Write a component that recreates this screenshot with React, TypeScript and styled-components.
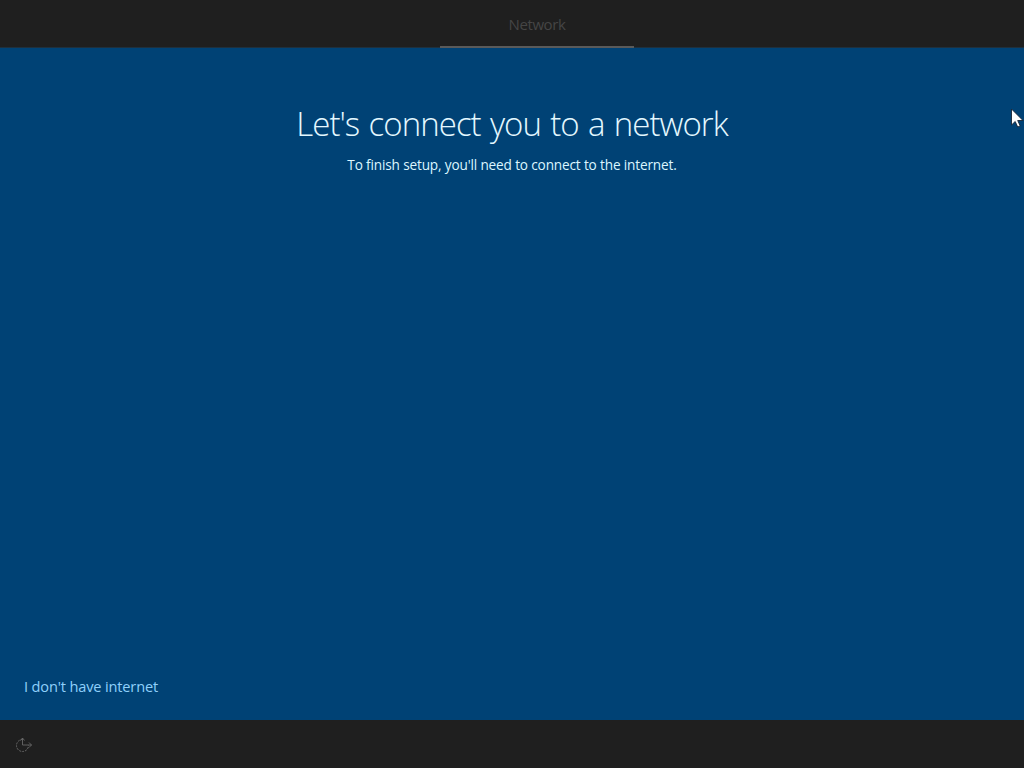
import type { FC } from "react"
import styled, { createGlobalStyle } from "styled-components"

const GlobalStyle = createGlobalStyle`
    body {
        margin: 0;
        overflow: hidden;
        font-family: "Open Sans", "Noto Sans", sans-serif;
    }
`

const Screen = styled.div`
    position: relative;
    display: flex;
    flex-direction: column;
    width: 1024px;
    height: 768px;
    background-color: #004275;
`

const TopBar = styled.nav`
    display: flex;
    justify-content: center;
    box-sizing: border-box;
    height: 48px;
    padding-left: 50px;
    background-color: #1f1f1f;
    box-shadow: inset 0 -1px 0 #1f303d;
`

const Tab = styled.div`
    display: flex;
    align-items: center;
    justify-content: center;
    box-sizing: border-box;
    width: 194px;
    padding-top: 2px;
    border-bottom: 2px solid #5a5a5a;
    color: #454545;
    font-size: 15px;
    letter-spacing: -0.4px;
`

const Content = styled.main`
    display: flex;
    flex: 1;
    flex-direction: column;
    align-items: center;
    padding: 52px 24px 0;
`

const Title = styled.h1`
    margin: 0;
    color: #e4f8ff;
    font-size: 33px;
    font-weight: 300;
    letter-spacing: -0.95px;
    line-height: 48px;
    word-spacing: 1.6px;
    white-space: nowrap;
`

const Subtitle = styled.p`
    margin: 7px 0 0;
    color: #dcf6ff;
    font-size: 13.6px;
    letter-spacing: -0.15px;
    line-height: 20px;
    white-space: nowrap;
`

const SkipLink = styled.a`
    align-self: flex-start;
    margin: auto 0 24px;
    color: #8fd0fb;
    font-size: 14.6px;
    letter-spacing: -0.16px;
    line-height: 20px;
    white-space: nowrap;
`

const BottomBar = styled.footer`
    display: flex;
    align-items: center;
    box-sizing: border-box;
    height: 48px;
    padding: 2px 0 0 15px;
    background-color: #1f1f1f;
`

const Pointer = styled.svg`
    position: absolute;
    top: 108px;
    left: 1011px;
`

const EaseOfAccessIcon: FC = () => (
    <svg width="18" height="18" viewBox="0 0 18 18" fill="none" stroke="#686868">
        <path d="M7.5 3.5A6 6 0 1 0 13.5 9.5" strokeDasharray="2 1" />
        <path d="M7.5 2v7h9M5.5 4.5l2-2.5 2 2.5M14 6.5l2.5 2.5-2.5 2.5" strokeWidth="0.9" />
    </svg>
)

const App: FC = () => {
    return (
        <Screen>
            <GlobalStyle />
            <TopBar>
                <Tab>Network</Tab>
            </TopBar>
            <Content>
                <Title>Let's connect you to a network</Title>
                <Subtitle>To finish setup, you'll need to connect to the internet.</Subtitle>
                <SkipLink>I don't have internet</SkipLink>
            </Content>
            <BottomBar>
                <EaseOfAccessIcon />
            </BottomBar>
            <Pointer width="13" height="20" viewBox="0 0 13 20">
                <path
                    d="M.5 1v16l3.7-3.5 2.5 5.5 2.5-1.1-2.5-5.4H12z"
                    fill="#fff"
                    stroke="#182535"
                    strokeWidth="0.9"
                />
            </Pointer>
        </Screen>
    )
}

export default App
